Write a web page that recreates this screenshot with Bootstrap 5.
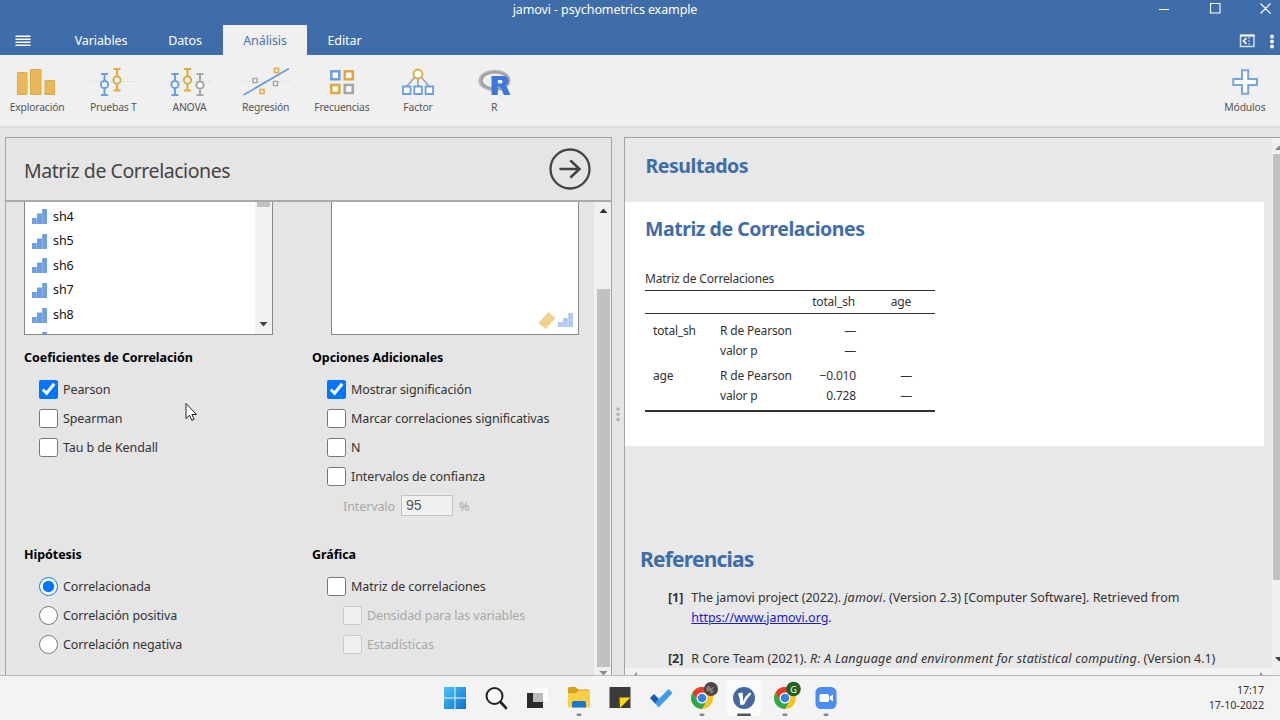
<!DOCTYPE html>
<html lang="es">

<head>
    <meta charset="UTF-8">
    <meta name="viewport" content="width=device-width, initial-scale=1.0">
    <title>jamovi - psychometrics example</title>
    <link rel="stylesheet" href="https://cdn.jsdelivr.net/npm/bootstrap@5.3.0/dist/css/bootstrap.min.css">
    <style>
        body {
            width: 1280px;
            height: 720px;
            font-family: "Noto Sans", "Open Sans", sans-serif;
            font-size: 12.5px;
            line-height: 20px;
            letter-spacing: -0.1px;
            color: #333;
            background: #e5e5e5;
        }

        svg {
            display: block;
            flex: none;
        }

        /* title bar and tabs */
        .app-header {
            height: 55px;
            background: #3e6da9;
            color: #fff;
        }

        .title-row {
            height: 25px;
            padding-left: 60px;
        }

        .title-text {
            line-height: 19px;
        }

        .tab-row {
            height: 30px;
        }

        .tab-row .menu-cell {
            width: 47px;
            padding-left: 15px;
        }

        .tab-row .nav-link {
            height: 30px;
            padding: 0;
            line-height: 31px;
            color: #fff;
            border-radius: 0;
            text-align: center;
        }

        .tab-row .nav-link.active {
            background: #f0f0f0;
            color: #4a74ad;
        }

        /* ribbon */
        .ribbon {
            height: 73px;
            background: #f0f0f0;
            border-bottom: 2px solid #dcdcdc;
            padding-top: 9px;
        }

        .ribbon-item {
            width: 76.2px;
            font-size: 10.4px;
            line-height: 16px;
            letter-spacing: -0.2px;
            color: #555;
        }

        /* work area */
        .work {
            height: 547px;
            padding-top: 9px;
        }

        .options-pane {
            width: 607px;
            margin-left: 5px;
            border: 1px solid #a3a3a3;
            border-bottom: 0;
        }

        .pane-title {
            height: 64px;
            padding: 0 20px 0 18px;
            border-bottom: 2px solid #aaa;
            font-size: 19.5px;
            letter-spacing: -0.45px;
            color: #444;
        }

        .pane-body {
            width: 588px;
            height: 473px;
            padding-left: 18px;
            overflow: hidden;
        }

        .var-list {
            width: 249px;
            height: 133px;
            background: #fff;
            border: 1px solid #888;
            border-top: 0;
            color: #111;
            overflow: hidden;
        }

        .var-rows {
            padding-top: 2.400px;
        }

        .var-list .var-row {
            height: 24.6px;
            padding-left: 7px;
            gap: 6px;
        }

        .list-scroll {
            width: 17px;
            background: #f2f2f2;
        }

        .list-thumb {
            width: 13px;
            height: 5px;
            background: #c1c1c1;
        }

        .target-list {
            width: 248px;
            margin-left: 58px;
        }

        .option-col {
            width: 288px;
            flex: none;
        }

        .group-title {
            font-weight: 700;
            color: #000;
            letter-spacing: -0.05px;
            height: 20px;
            margin-bottom: 7px;
        }

        .opt-row {
            height: 28.900px;
            padding: 1px 0 0 15px;
            gap: 5px;
        }

        .opt-row input {
            width: 19px;
            height: 19px;
            margin: -1px 0 0;
            accent-color: #0075ff;
        }

        .opt-row.is-off {
            color: #a8a8a8;
            padding-left: 31px;
        }

        .opt-row.interval-row {
            height: 31px;
            gap: 6px;
        }

        .interval-box {
            width: 52px;
            height: 21px;
            margin-top: -2px;
            padding: 0 4px;
            border: 1px solid #c3c3c3;
            background: #f0f0f0;
            color: #555;
            font: 14px/19px "Liberation Sans", Arial, sans-serif;
        }

        .options-top {
            height: 197px;
            padding-top: 13px;
        }

        .options-bottom {
            padding-top: 13px;
        }

        .pane-scroll {
            width: 17px;
            padding-left: 1px;
            background: #f0f0f0;
            overflow: hidden;
        }

        .pane-thumb {
            width: 13px;
            height: 378px;
            background: #c1c1c1;
        }

        .splitter {
            width: 12px;
            padding-top: 268px;
        }

        .results-pane {
            border: 1px solid #a3a3a3;
            border-width: 1px 0 0 1px;
            background: #e8e8e8;
            min-width: 0;
        }

        .results-view {
            width: 647px;
            height: 530px;
            overflow: hidden;
        }

        .results-head {
            height: 64px;
            padding: 15px 0 0 20.5px;
        }

        .heading-blue {
            margin: 0;
            font-size: 19.5px;
            line-height: 26px;
            font-weight: 700;
            color: #3e6da9;
            letter-spacing: -0.45px;
        }

        .results-block {
            width: 639px;
            height: 244px;
            padding: 14px 0 0 20px;
            background: #fff;
        }

        .stat-table {
            width: 290px;
            margin-top: 27px;
            caption-side: top;
            border-bottom: 2px solid #333;
            table-layout: fixed;
            font-size: 12px;
            letter-spacing: -0.18px;
        }

        .stat-table caption {
            padding: 0;
            height: 21px;
            line-height: 19px;
            color: #333;
        }

        .stat-table thead th {
            height: 23px;
            font-weight: 400;
            border-top: 1px solid #333;
            border-bottom: 1px solid #333;
        }

        .stat-table td {
            height: 20px;
            line-height: 19px;
            padding: 0;
        }

        .stat-table .gap-above td {
            height: 25px;
            padding-top: 5px;
        }

        .stat-table .first-row td {
            height: 27px;
            padding-top: 7px;
        }

        .stat-table .last-row td {
            height: 25px;
            padding-bottom: 5px;
        }

        .refs {
            padding: 99px 0 0 15px;
        }

        .refs .heading-blue {
            font-size: 21px;
            line-height: 28px;
            letter-spacing: -0.8px;
        }

        .ref-row {
            margin: 15px 0 21px 28px;
            gap: 8px;
            letter-spacing: -0.04px;
            white-space: nowrap;
        }

        .ref-row i {
            letter-spacing: 0.2px;
        }

        .ref-row a {
            color: #1a1acc;
        }

        .h-scroll {
            height: 7px;
            background: #f3f3f3;
        }

        .v-scroll {
            width: 8px;
            background: #f0f0f0;
        }

        .v-thumb {
            width: 7px;
            height: 426px;
            background: #c1c1c1;
        }

        /* taskbar */
        .taskbar {
            height: 45px;
            border-top: 1px solid #b9b9b9;
            background: #f3f3f3;
        }

        .task-icons {
            padding-left: 434px;
            width: 1160px;
        }

        .task-cell {
            width: 41.3px;
            height: 44px;
        }

        .clock {
            width: 104px;
            padding-top: 6px;
            font-size: 10.8px;
            line-height: 15px;
        }

        .pointer {
            position: absolute;
            left: 185px;
            top: 402px;
        }
    </style>
</head>

<body class="overflow-hidden">
    <!-- shared icons -->
    <svg width="0" height="0" class="position-absolute">
        <symbol id="ordinal" viewBox="0 0 15 15">
            <path d="M0 9h4.800v6H0zM5 4.500h5V15H5zM10.200 0H15v15h-4.800z" />
        </symbol>
        <symbol id="chrome" viewBox="0 0 24 24">
            <circle cx="12" cy="12" r="11" fill="#fbc116" />
            <path d="M2.500 6.500A11 11 0 0 1 21.500 6.500H12L7.200 14.800z" fill="#e33b2e" />
            <path d="M2.500 6.500A11 11 0 0 0 12 23l4.800-8.200H7.200z" fill="#2da94f" />
            <circle cx="12" cy="12" r="5.500" fill="#fff" />
            <circle cx="12" cy="12" r="4.300" fill="#3a80e8" />
        </symbol>
    </svg>

    <header class="app-header">
        <div class="title-row d-flex">
            <div class="title-text text-center flex-fill">jamovi - psychometrics example</div>
            <svg width="130" height="18" fill="none" stroke="#fff" stroke-width="1.100">
                <path d="M9 9.500h10M60.500 3.500h9.500v9.500h-9.500zM110.500 3.500l10 10M120.500 3.500l-10 10" />
            </svg>
        </div>
        <div class="tab-row d-flex">
            <div class="menu-cell">
                <svg width="16" height="30" stroke="#fff" stroke-width="1.500">
                    <path d="M.5 11.200h15M.5 14.200h15M.5 17.200h15M.5 20.200h15" />
                </svg>
            </div>
            <nav class="nav nav-pills flex-nowrap">
                <a class="nav-link" style="width:108px">Variables</a>
                <a class="nav-link me-2" style="width:60px">Datos</a>
                <a class="nav-link active" style="width:84px">Análisis</a>
                <a class="nav-link" style="width:75px">Editar</a>
            </nav>
            <svg class="ms-auto" width="42" height="30" fill="none" stroke="#fff">
                <path d="M2.500 10.500h13.500v11H2.500z" stroke="#cfdcf0" stroke-width="1.500" />
                <path d="M2 10.500h14.500" stroke-width="2" />
                <path d="M8.500 13.200L5.500 16l3 2.800" stroke-width="1.700" />
                <path d="M11 12v9" stroke="#cfdcf0" stroke-dasharray="2 1" />
                <g fill="#fff" stroke="none">
                    <circle cx="34" cy="11.500" r="2" />
                    <circle cx="34" cy="16.500" r="2" />
                    <circle cx="34" cy="21.500" r="2" />
                </g>
            </svg>
        </div>
    </header>

    <div class="ribbon d-flex">
        <div class="ribbon-item d-flex flex-column align-items-center" style="margin-left:-1px">
            <svg width="50" height="35" fill="#e8b95a" stroke="#dfa945">
                <path d="M5.500 8.500H15v22H5.500zM18.500 5.500H29v25H18.500zM33 16.500h9.500v14H33z" />
            </svg>
            Exploración
        </div>
        <div class="ribbon-item d-flex flex-column align-items-center">
            <svg width="50" height="35" fill="none" stroke-width="2">
                <path d="M2 17.500h46" stroke="#ccc" stroke-width="1" stroke-dasharray="1 2" />
                <g stroke="#6c9fe0">
                    <path d="M13 10h7M13 31h7M16.500 10v21" />
                    <circle cx="16.500" cy="20.500" r="3.600" fill="#fff" />
                </g>
                <g stroke="#e0a93f">
                    <path d="M25.500 5h7M25.500 26.500h7M29 5v21" />
                    <circle cx="29" cy="16" r="3.600" fill="#fff" />
                </g>
            </svg>
            Pruebas T
        </div>
        <div class="ribbon-item d-flex flex-column align-items-center">
            <svg width="50" height="35" fill="none" stroke-width="2">
                <path d="M2 17.500h46" stroke="#ccc" stroke-width="1" stroke-dasharray="1 2" />
                <g stroke="#6c9fe0">
                    <path d="M7.500 10h7M7.500 31h7M11 10v21" />
                    <circle cx="11" cy="20.500" r="3.600" fill="#fff" />
                </g>
                <g stroke="#e0a93f">
                    <path d="M20 5h7M20 26.500h7M23.500 5v21" />
                    <circle cx="23.500" cy="16" r="3.600" fill="#fff" />
                </g>
                <g stroke="#a6a6a6">
                    <path d="M32.500 10h7M32.500 31h7M36 10v21" />
                    <circle cx="36" cy="21" r="3.600" fill="#fff" />
                </g>
            </svg>
            ANOVA
        </div>
        <div class="ribbon-item d-flex flex-column align-items-center">
            <svg width="50" height="35" fill="none" stroke-width="1.500">
                <path d="M2 17.500h46" stroke="#ccc" stroke-width="1" stroke-dasharray="1 2" />
                <path d="M2.500 31L48 4.500" stroke="#6c9fe0" stroke-width="1.800" />
                <path d="M33.500 4.500h4v4h-4zM19 25.500h4v4h-4z" stroke="#e0a93f" fill="#fff" />
                <path d="M12 14.500h4v4h-4zM32.500 17.500h4v4h-4z" stroke="#a6a6a6" fill="#fff" />
            </svg>
            Regresión
        </div>
        <div class="ribbon-item d-flex flex-column align-items-center">
            <svg width="50" height="35" fill="#fff" stroke-width="2.600">
                <path d="M14.300 7.300h8v8h-8z" stroke="#6c9fe0" />
                <path d="M27.800 7.300h8v8h-8zM14.300 21h8v8h-8z" stroke="#e0a93f" />
                <path d="M27.800 21h8v8h-8z" stroke="#a6a6a6" />
            </svg>
            Frecuencias
        </div>
        <div class="ribbon-item d-flex flex-column align-items-center">
            <svg width="50" height="35" fill="#fff" stroke-width="1.800">
                <path d="M25 14v9M22 13L14 22M28 13l8 9" fill="none" stroke="#a6a6a6" />
                <circle cx="25" cy="10" r="4.500" stroke="#e0a93f" />
                <path d="M10 22.500h7.500v7.500H10zM21.300 22.500h7.500v7.500h-7.500zM32.600 22.500h7.500v7.500h-7.500z" stroke="#6c9fe0" />
            </svg>
            Factor
        </div>
        <div class="ribbon-item d-flex flex-column align-items-center">
            <svg width="50" height="35" fill="none">
                <ellipse cx="25.500" cy="16.500" rx="14.700" ry="9.300" stroke="#b9b9bb" stroke-width="3" />
                <ellipse cx="26" cy="16.500" rx="13.500" ry="8.300" stroke="#a2a2a6" stroke-width="2.500" />
                <path d="M22.500 12h10.500c5 0 6.500 2 6.500 4.800 0 2.500-1.300 3.900-3.500 4.500 1 .4 1.600 1.200 2.200 2.300l3.300 7.400h-6.700l-3-7c-.5-1-.9-1.300-2-1.300h-1v8.300h-6.300zM28.800 16v3.500h2.900c1.200 0 1.900-.6 1.900-1.800s-.7-1.700-1.900-1.700z" fill="#3f78dc" fill-rule="evenodd" />
            </svg>
            R
        </div>
        <div class="ribbon-item d-flex flex-column align-items-center ms-auto" style="margin-right:-3px">
            <svg width="50" height="35">
                <path d="M22 6.200h6.200v8.700h8.700v6.200h-8.700v8.700H22v-8.700h-8.700v-6.200H22z" fill="#fff" stroke="#79a3e0" stroke-width="2" />
            </svg>
            Módulos
        </div>
    </div>

    <main class="work d-flex">
        <section class="options-pane">
            <div class="pane-title d-flex align-items-center justify-content-between">
                <span class="pt-1">Matriz de Correlaciones</span>
                <svg width="42" height="42" fill="none" stroke="#444" stroke-width="2.300">
                    <circle cx="21" cy="21" r="19.500" />
                    <path d="M11.500 21h18.500M22 13l8.500 8-8.500 8" stroke-width="2.500" stroke-linecap="round" />
                </svg>
            </div>
            <div class="d-flex">
                <div class="pane-body">
                    <div class="d-flex">
                        <div class="var-list d-flex">
                            <div class="var-rows flex-fill">
                                <div class="var-row d-flex align-items-center"><svg width="15" height="15" fill="#6f9fe3"><use href="#ordinal" /></svg>sh4</div>
                                <div class="var-row d-flex align-items-center"><svg width="15" height="15" fill="#6f9fe3"><use href="#ordinal" /></svg>sh5</div>
                                <div class="var-row d-flex align-items-center"><svg width="15" height="15" fill="#6f9fe3"><use href="#ordinal" /></svg>sh6</div>
                                <div class="var-row d-flex align-items-center"><svg width="15" height="15" fill="#6f9fe3"><use href="#ordinal" /></svg>sh7</div>
                                <div class="var-row d-flex align-items-center"><svg width="15" height="15" fill="#6f9fe3"><use href="#ordinal" /></svg>sh8</div>
                                <div class="var-row d-flex align-items-center"><svg width="15" height="15" fill="#6f9fe3"><use href="#ordinal" /></svg></div>
                            </div>
                            <div class="list-scroll d-flex flex-column align-items-center justify-content-between">
                                <div class="list-thumb"></div>
                                <svg width="9" height="13"><path d="M.5 1h8l-4 4.500z" fill="#444" /></svg>
                            </div>
                        </div>
                        <div class="var-list target-list d-flex justify-content-end align-items-end">
                            <svg width="39" height="22">
                                <path d="M9.500 .5l6.500 5.500-9.500 10.500L0 11z" fill="#f3d08c" stroke="#ecc375" stroke-width=".7" />
                                <path d="M19 10h4.800v5H19zM24 6h4.800v9H24zM29.200 1H34v14h-4.800z" fill="#b3cbf1" />
                            </svg>
                        </div>
                    </div>
                    <div class="options-top d-flex">
                        <div class="option-col">
                            <div class="group-title">Coeficientes de Correlación</div>
                            <label class="opt-row d-flex align-items-center"><input type="checkbox" checked>Pearson</label>
                            <label class="opt-row d-flex align-items-center"><input type="checkbox">Spearman</label>
                            <label class="opt-row d-flex align-items-center"><input type="checkbox">Tau b de Kendall</label>
                        </div>
                        <div class="option-col">
                            <div class="group-title">Opciones Adicionales</div>
                            <label class="opt-row d-flex align-items-center"><input type="checkbox" checked>Mostrar significación</label>
                            <label class="opt-row d-flex align-items-center"><input type="checkbox">Marcar correlaciones significativas</label>
                            <label class="opt-row d-flex align-items-center"><input type="checkbox">N</label>
                            <label class="opt-row d-flex align-items-center"><input type="checkbox">Intervalos de confianza</label>
                            <div class="opt-row is-off interval-row d-flex align-items-center">Intervalo <span class="interval-box">95</span> %</div>
                        </div>
                    </div>
                    <div class="options-bottom d-flex">
                        <div class="option-col">
                            <div class="group-title">Hipótesis</div>
                            <label class="opt-row d-flex align-items-center"><input type="radio" name="hyp" checked>Correlacionada</label>
                            <label class="opt-row d-flex align-items-center"><input type="radio" name="hyp">Correlación positiva</label>
                            <label class="opt-row d-flex align-items-center"><input type="radio" name="hyp">Correlación negativa</label>
                        </div>
                        <div class="option-col">
                            <div class="group-title">Gráfica</div>
                            <label class="opt-row d-flex align-items-center"><input type="checkbox">Matriz de correlaciones</label>
                            <label class="opt-row is-off d-flex align-items-center"><input type="checkbox" disabled>Densidad para las variables</label>
                            <label class="opt-row is-off d-flex align-items-center"><input type="checkbox" disabled>Estadísticas</label>
                        </div>
                    </div>
                </div>
                <div class="pane-scroll d-flex flex-column align-items-center">
                    <svg width="9" height="87"><path d="M.5 11h8l-4-4.500z" fill="#333" /></svg>
                    <div class="pane-thumb"></div>
                    <svg width="9" height="8"><path d="M.5 4h8l-4 4.500z" fill="#888" /></svg>
                </div>
            </div>
        </section>

        <div class="splitter">
            <svg width="12" height="20" fill="#b3b3b3">
                <circle cx="6" cy="4" r="1.800" />
                <circle cx="6" cy="9.300" r="1.800" />
                <circle cx="6" cy="14.600" r="1.800" />
            </svg>
        </div>

        <section class="results-pane flex-fill d-flex">
            <div>
                <div class="results-view">
                    <div class="results-head">
                        <h1 class="heading-blue">Resultados</h1>
                    </div>
                    <div class="results-block">
                        <h2 class="heading-blue">Matriz de Correlaciones</h2>
                        <table class="stat-table">
                            <caption>Matriz de Correlaciones</caption>
                            <colgroup>
                                <col style="width:75px">
                                <col style="width:80px">
                                <col style="width:56px">
                                <col style="width:56px">
                                <col style="width:23px">
                            </colgroup>
                            <thead>
                                <tr>
                                    <th></th>
                                    <th></th>
                                    <th class="text-end">total_sh</th>
                                    <th class="text-end">age</th>
                                    <th></th>
                                </tr>
                            </thead>
                            <tbody>
                                <tr class="first-row">
                                    <td class="ps-2">total_sh</td>
                                    <td>R de Pearson</td>
                                    <td class="text-end">—</td>
                                    <td></td>
                                    <td></td>
                                </tr>
                                <tr>
                                    <td></td>
                                    <td>valor p</td>
                                    <td class="text-end">—</td>
                                    <td></td>
                                    <td></td>
                                </tr>
                                <tr class="gap-above">
                                    <td class="ps-2">age</td>
                                    <td>R de Pearson</td>
                                    <td class="text-end">−0.010</td>
                                    <td class="text-end">—</td>
                                    <td></td>
                                </tr>
                                <tr class="last-row">
                                    <td></td>
                                    <td>valor p</td>
                                    <td class="text-end">0.728</td>
                                    <td class="text-end">—</td>
                                    <td></td>
                                </tr>
                            </tbody>
                        </table>
                    </div>
                    <div class="refs">
                        <h2 class="heading-blue">Referencias</h2>
                        <div class="ref-row d-flex">
                            <b>[1]</b>
                            <div>The jamovi project (2022). <i>jamovi</i>. (Version 2.3) [Computer Software]. Retrieved from<br><a href="#">https://www.jamovi.org</a>.</div>
                        </div>
                        <div class="ref-row d-flex">
                            <b>[2]</b>
                            <div>R Core Team (2021). <i>R: A Language and environment for statistical computing</i>. (Version 4.1)</div>
                        </div>
                    </div>
                </div>
                <div class="h-scroll d-flex justify-content-between px-2">
                    <svg width="5" height="7"><path d="M4 4v3L1 7z" fill="#888" /></svg>
                    <svg width="5" height="7"><path d="M1 4v3l3 0z" fill="#888" /></svg>
                </div>
            </div>
            <div class="v-scroll d-flex flex-column align-items-end">
                <svg width="7" height="16"><path d="M2 12h8L6 7.500z" fill="#888" /></svg>
                <div class="v-thumb"></div>
                <svg width="7" height="88"><path d="M2 77h8l-4 4.500z" fill="#444" /></svg>
            </div>
        </section>
    </main>

    <footer class="taskbar d-flex">
        <div class="task-icons d-flex">
            <div class="task-cell d-flex justify-content-center">
                <svg width="24" height="44">
                    <defs>
                        <linearGradient id="win" x2="1" y2="1">
                            <stop stop-color="#4cc6f5" />
                            <stop offset="1" stop-color="#0a6fd0" />
                        </linearGradient>
                    </defs>
                    <path d="M1 11h10.500v10.500H1zM12.500 11H23v10.500H12.500zM1 22.500h10.500V33H1zM12.500 22.500H23V33H12.500z" fill="url(#win)" />
                </svg>
            </div>
            <div class="task-cell d-flex justify-content-center">
                <svg width="24" height="44" fill="none" stroke="#222" stroke-width="2">
                    <circle cx="10.500" cy="20" r="8" fill="#f8f8f8" />
                    <path d="M16.500 26l5.500 6" stroke-width="2.600" stroke-linecap="round" />
                </svg>
            </div>
            <div class="task-cell d-flex justify-content-center">
                <svg width="24" height="44">
                    <path d="M2 17h16v15H2z" fill="#2b2b2b" />
                    <path d="M8 12h15v14H8z" fill="#fff" opacity=".75" />
                    <path d="M8 17h10v9H8z" fill="#bbb" />
                </svg>
            </div>
            <div class="task-cell d-flex justify-content-center">
                <svg width="24" height="44">
                    <path d="M1 12.500q0-1.500 1.500-1.500h6l3 2.500h10q1.500 0 1.500 1.500v8H1z" fill="#d99e1c" />
                    <path d="M1 17h8l3-2.500h11V30q0 1.500-1.500 1.500h-19Q1 31.500 1 30z" fill="#fbcf45" />
                    <path d="M5 31.500V27q0-2 2-2h10q2 0 2 2v4.500z" fill="#1577cf" />
                    <rect x="9.500" y="37.500" width="5" height="2.500" rx="1.200" fill="#888" />
                </svg>
            </div>
            <div class="task-cell d-flex justify-content-center">
                <svg width="24" height="44">
                    <path d="M1.500 11h21v21h-21z" fill="#3b3b3b" />
                    <path d="M11.500 21.500h11L12 32z" fill="#ffd90a" />
                </svg>
            </div>
            <div class="task-cell d-flex justify-content-center">
                <svg width="24" height="44">
                    <path d="M1 22l4-4 5 5-3.500 5z" fill="#1b5bb0" />
                    <path d="M6 27L19.500 13l4 4L9.500 31.500z" fill="#3d9ae6" />
                </svg>
            </div>
            <div class="task-cell d-flex justify-content-center">
                <svg width="32" height="44">
                    <use href="#chrome" x="4" y="10" width="24" height="24" />
                    <circle cx="25" cy="13" r="7" fill="#4b4543" />
                    <path d="M20 12l3-3 1.500 3 4-1-2.500 3 2 2-3 2-1-3-3 1z" fill="#857d7a" />
                    <rect x="13.500" y="37.500" width="5" height="2.500" rx="1.200" fill="#888" />
                </svg>
            </div>
            <div class="task-cell d-flex justify-content-center">
                <svg width="36" height="44">
                    <rect x=".5" y="4" width="35" height="36" rx="3" fill="#fbfbfb" />
                    <circle cx="18" cy="22" r="11" fill="#43699f" />
                    <path d="M12 17.500l4.500-1q.8 4.500.5 9 2-5.500 6.500-9l2 1.200q-5 4.800-7.500 11h-4q.3-6.500-2-11.200z" fill="#fff" />
                    <rect x="11" y="37.500" width="14" height="2.500" rx="1.200" fill="#555" />
                </svg>
            </div>
            <div class="task-cell d-flex justify-content-center">
                <svg width="32" height="44">
                    <use href="#chrome" x="4" y="10" width="24" height="24" />
                    <circle cx="24.500" cy="13" r="7.300" fill="#22601f" />
                    <text x="24.500" y="16.500" fill="#fff" font-size="9" text-anchor="middle">G</text>
                    <rect x="13.500" y="37.500" width="5" height="2.500" rx="1.200" fill="#888" />
                </svg>
            </div>
            <div class="task-cell d-flex justify-content-center">
                <svg width="24" height="44">
                    <rect x="1.500" y="11" width="21" height="22" rx="5.500" fill="#4b8cf5" />
                    <rect x="5.500" y="18" width="9.500" height="8" rx="1.500" fill="#fff" />
                    <path d="M15.500 21l3.500-2.500v7L15.500 23z" fill="#fff" />
                    <rect x="9.500" y="37.500" width="5" height="2.500" rx="1.200" fill="#888" />
                </svg>
            </div>
        </div>
        <div class="clock text-end">17:17<br>17-10-2022</div>
    </footer>

    <!-- mouse pointer over the options -->
    <svg class="pointer" width="14" height="20">
        <path d="M1 1.500v15l3.500-3.200 2.300 5 2.300-1-2.200-4.800h4.600z" fill="#fff" stroke="#222" />
    </svg>

    <script src="https://cdn.jsdelivr.net/npm/bootstrap@5.3.0/dist/js/bootstrap.bundle.min.js"></script>
</body>

</html>
